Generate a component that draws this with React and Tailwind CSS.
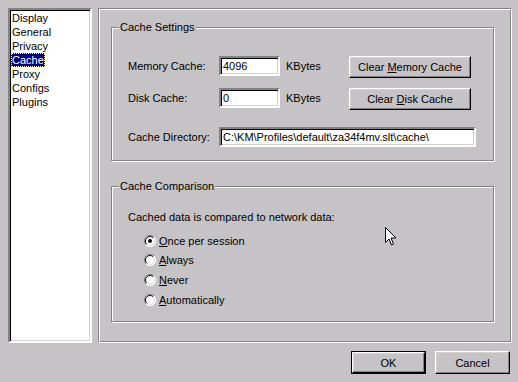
import React from 'react';

const font = "font-['Liberation_Sans',Arial,sans-serif]";
const sunken = 'border-2 border-t-[#848284] border-l-[#848284] border-b-white border-r-white shadow-[inset_1px_1px_0_#000,inset_-1px_-1px_0_#d6d3ce]';
const raised = 'border border-t-white border-l-white border-b-black border-r-black shadow-[inset_-1px_-1px_0_#848284,inset_1px_1px_0_#d6d3ce]';

function Group({ title, className, children }) {
  return (
    <div className={`relative border border-[#848284] shadow-[inset_1px_1px_0_#fff,1px_1px_0_#fff] ${className}`}>
      <span className="absolute -top-[8px] left-[7px] bg-[#c6c3c6] px-[1px] leading-[14px]">{title}</span>
      {children}
    </div>
  );
}

function Button({ children, className = '', isDefault }) {
  const btn = (
    <div className={`flex items-center justify-center ${raised} ${isDefault ? 'h-full w-full' : className}`}>
      <span>{children}</span>
    </div>
  );
  if (isDefault) {
    return <div className={`border border-black ${className}`}>{btn}</div>;
  }
  return btn;
}

function Radio({ checked, children }) {
  return (
    <div className="flex h-[19.6px] items-center">
      <svg width="12" height="12" viewBox="0 0 12 12" className="mr-[3px] shrink-0">
        <circle cx="6" cy="6" r="5.5" fill="#fff" />
        <path d="M10 2 A5.5 5.5 0 0 0 2 10" fill="none" stroke="#848284" strokeWidth="1" />
        <path d="M9.2 2.8 A4.5 4.5 0 0 0 2.8 9.2" fill="none" stroke="#000" strokeWidth="1" />
        <path d="M2 10 A5.5 5.5 0 0 0 10 2" fill="none" stroke="#fff" strokeWidth="1" />
        <path d="M2.8 9.2 A4.5 4.5 0 0 0 9.2 2.8" fill="none" stroke="#d6d3ce" strokeWidth="1" />
        {checked && <circle cx="6" cy="6" r="2" fill="#000" />}
      </svg>
      <span>{children}</span>
    </div>
  );
}

const items = ['Display', 'General', 'Privacy', 'Cache', 'Proxy', 'Configs', 'Plugins'];

export default function App() {
  return (
    <div className={`relative flex h-[382px] w-[518px] flex-col bg-[#c6c3c6] text-[11px] leading-[14px] text-black ${font}`}>
      <div className="flex h-[343px] gap-[6px] pl-[8px] pr-[6px] pt-[8px]">
        {/* left list */}
        <div className={`w-[84px] bg-white pl-[1px] pt-[1px] ${sunken}`}>
          {items.map(it => (
            <div key={it} className="flex h-[14px] items-center">
              {it === 'Cache' ? (
                <span className="bg-[#000084] px-[1px] text-white outline outline-1 outline-dotted outline-[#fffb9c] -outline-offset-1">{it}</span>
              ) : (
                <span className="px-[1px]">{it}</span>
              )}
            </div>
          ))}
        </div>

        {/* right panel */}
        <div className="flex flex-1 flex-col border border-t-[#848284] border-l-[#848284] border-b-white border-r-white shadow-[inset_1px_1px_0_#fff,inset_-1px_-1px_0_#848284] pl-[12px] pr-[17px] pt-[18px]">
          <Group title="Cache Settings" className="h-[134px] pl-[16px] pt-[28px]">
            <div className="flex h-[22px] items-start">
              <div className="flex h-[20px] w-[91px] items-center">Memory Cache:</div>
              <div className={`flex h-[20px] w-[61px] items-center bg-white pl-[2px] ${sunken}`}>4096</div>
              <div className="ml-[6px] flex h-[20px] w-[63px] items-center">KBytes</div>
              <Button className="h-[22px] w-[122px]">Clear <u>M</u>emory Cache</Button>
            </div>
            <div className="mt-[10px] flex h-[22px] items-start">
              <div className="flex h-[20px] w-[91px] items-center">Disk Cache:</div>
              <div className={`flex h-[20px] w-[61px] items-center bg-white pl-[2px] ${sunken}`}>0</div>
              <div className="ml-[6px] flex h-[20px] w-[63px] items-center">KBytes</div>
              <Button className="h-[22px] w-[122px]">Clear <u>D</u>isk Cache</Button>
            </div>
            <div className="mt-[17px] flex h-[20px] items-start">
              <div className="flex h-[20px] w-[91px] items-center">Cache Directory:</div>
              <div className={`flex h-[20px] w-[257px] items-center bg-white pl-[2px] ${sunken}`}>C:\KM\Profiles\default\za34f4mv.slt\cache\</div>
            </div>
          </Group>

          <Group title="Cache Comparison" className="mt-[25px] h-[136px] pl-[16px] pt-[22px]">
            <div className="flex h-[16px] items-center">Cached data is compared to network data:</div>
            <div className="ml-[16px] mt-[6px]">
              <Radio checked><u>O</u>nce per session</Radio>
              <Radio><u>A</u>lways</Radio>
              <Radio><u>N</u>ever</Radio>
              <Radio><u>A</u>utomatically</Radio>
            </div>
          </Group>
        </div>
      </div>

      {/* bottom buttons */}
      <div className="flex justify-end gap-[9px] pr-[8px] pt-[8px]">
        <Button isDefault className="h-[23px] w-[75px]">OK</Button>
        <Button className="h-[23px] w-[75px]">Cancel</Button>
      </div>

      {/* mouse pointer */}
      <svg className="absolute left-[385px] top-[227px]" width="12" height="19" viewBox="0 0 12 19">
        <path d="M0.5 0.5 L0.5 15.5 L4 12 L6.5 18 L8.5 17 L6 11 L11 11 Z" fill="#fff" stroke="#000" strokeWidth="1" strokeLinejoin="miter" />
      </svg>
    </div>
  );
}
